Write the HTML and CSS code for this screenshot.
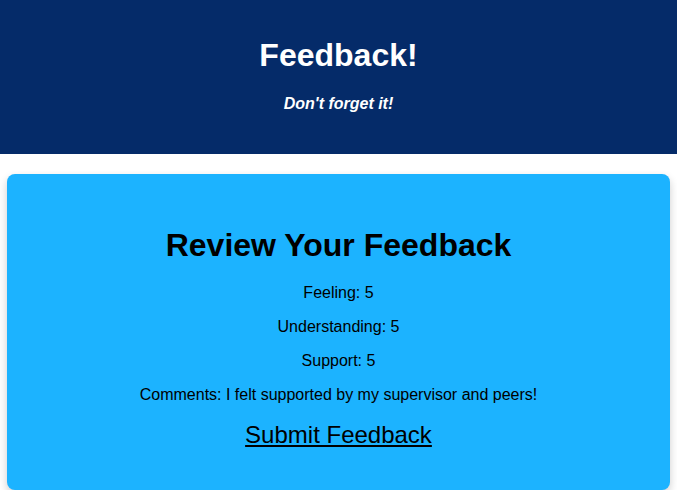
FILE: index.html
```html
<!DOCTYPE html>
<html>
<head>
<meta charset="utf-8">
<link rel="stylesheet" href="styles.css">
</head>
<body>
<header class="app-header">
  <h1 class="app-title">Feedback!</h1>
  <p class="app-tagline"><em>Don't forget it!</em></p>
</header>
<main class="review-card">
  <h2 class="review-title">Review Your Feedback</h2>
  <p class="review-line">Feeling: 5</p>
  <p class="review-line">Understanding: 5</p>
  <p class="review-line">Support: 5</p>
  <p class="review-line">Comments: I felt supported by my supervisor and peers!</p>
  <a class="submit-link" href="#">Submit Feedback</a>
</main>
</body>
</html>
```

FILE: styles.css
```css
html, body {
  margin: 0;
  padding: 0;
  background: #ffffff;
  font-family: "Liberation Sans", Arial, Helvetica, sans-serif;
  color: #000;
}

.app-header {
  background: #052b69;
  color: #fff;
  text-align: center;
  height: 154px;
  box-sizing: border-box;
  padding-top: 37px;
}

.app-title {
  margin: 0 0 21px;
  font-size: 32px;
  font-weight: bold;
  line-height: 36.8px;
}

.app-tagline {
  margin: 0;
  font-size: 16px;
  font-weight: bold;
  line-height: 18.4px;
}

.review-card {
  margin: 20px 7px 0;
  background: #1cb3ff;
  border-radius: 8px;
  box-shadow: 0 4px 8px rgba(0, 0, 0, 0.2);
  text-align: center;
  padding: 53px 16px 41px;
  display: flex;
  flex-direction: column;
  align-items: center;
}

.review-title {
  margin: 0 0 20px;
  font-size: 32px;
  font-weight: bold;
  line-height: 36.8px;
}

.review-line {
  margin: 0 0 15.6px;
  font-size: 16px;
  line-height: 18.4px;
}

.review-line:last-of-type {
  margin-bottom: 17px;
}

.submit-link {
  font-size: 24px;
  line-height: 27.6px;
  color: #000;
  text-decoration: underline;
}
```
